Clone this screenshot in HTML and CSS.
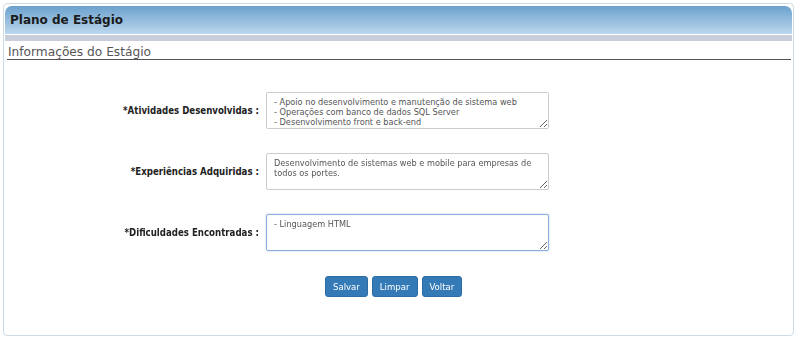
FILE: index.html
```html
<!DOCTYPE html>
<html lang="pt-BR">
<head>
  <meta charset="UTF-8">
  <title>Plano de Estágio</title>
  <link rel="stylesheet" href="styles.css">
</head>
<body>
  <div class="panel">
    <div class="panel-header">
      <h1>Plano de Estágio</h1>
    </div>
    <div class="panel-band"></div>

    <h2 class="section-title">Informações do Estágio</h2>

    <form class="form">
      <label class="form-label" for="atividades">*Atividades Desenvolvidas :</label>
      <textarea id="atividades" class="form-text">- Apoio no desenvolvimento e manutenção de sistema web
- Operações com banco de dados SQL Server
- Desenvolvimento front e back-end</textarea>

      <label class="form-label" for="experiencias">*Experiências Adquiridas :</label>
      <textarea id="experiencias" class="form-text">Desenvolvimento de sistemas web e mobile para empresas de todos os portes.</textarea>

      <label class="form-label" for="dificuldades">*Dificuldades Encontradas :</label>
      <textarea id="dificuldades" class="form-text focused">- Linguagem HTML</textarea>

      <div class="form-actions">
        <button type="button" class="btn">Salvar</button>
        <button type="button" class="btn">Limpar</button>
        <button type="button" class="btn">Voltar</button>
      </div>
    </form>
  </div>
</body>
</html>
```

FILE: styles.css
```css
body {
  margin: 0;
  padding: 0;
  background-color: #fff;
  font-family: "DejaVu Sans", Verdana, sans-serif;
  color: #333;
}
.panel {
  margin: 3px 6px 0 3px;
  height: 333px;
  border: 1px solid #cddbe5;
  border-radius: 4px;
  padding: 2px 1px 0 1px;
  box-sizing: border-box;
}
.panel-header {
  height: 28px;
  border-radius: 7px 7px 0 0;
  background: linear-gradient(to bottom, #6ba1cd, #bcd7ee);
  border-bottom: 1px solid #fff;
  display: flex;
  align-items: center;
  padding-left: 5px;
}
.panel-header h1 {
  margin: 0;
  font-size: 12px;
  font-weight: bold;
  color: #1b1b1b;
}
.panel-band {
  height: 6px;
  background-color: #c8cfdb;
}
.section-title {
  margin: 0 1px 0 2px;
  padding: 4px 0 0 1px;
  font-size: 12.2px;
  font-weight: normal;
  color: #555;
  line-height: 14px;
  border-bottom: 1px solid #555;
}
.form {
  display: grid;
  grid-template-columns: 254px 283px;
  column-gap: 7px;
  row-gap: 24px;
  align-items: center;
  padding-top: 32px;
}
.form-label {
  text-align: right;
  font-family: "DejaVu Sans Condensed", "DejaVu Sans", sans-serif;
  font-size: 9.6px;
  font-weight: bold;
  color: #222;
}
.form-text {
  box-sizing: border-box;
  width: 283px;
  height: 37px;
  margin: 0;
  padding: 4px 7px;
  border: 1px solid #ccc;
  border-radius: 2px;
  font-family: "DejaVu Sans Condensed", "DejaVu Sans", sans-serif;
  font-size: 9.1px;
  line-height: 10px;
  color: #555;
  resize: vertical;
}
.form-text.focused {
  border-color: #8cb0dc;
  box-shadow: 0 0 2px rgba(102, 150, 210, 0.5);
}
.form-actions {
  grid-column: 2;
  display: flex;
  gap: 4px;
  padding-left: 59px;
  margin-top: 1px;
}
.btn {
  height: 21px;
  padding: 0 7px;
  border: 1px solid #2e6da4;
  border-radius: 3px;
  background-color: #337ab7;
  color: #fff;
  font-family: "DejaVu Sans Condensed", "DejaVu Sans", sans-serif;
  font-size: 9.5px;
}
```
